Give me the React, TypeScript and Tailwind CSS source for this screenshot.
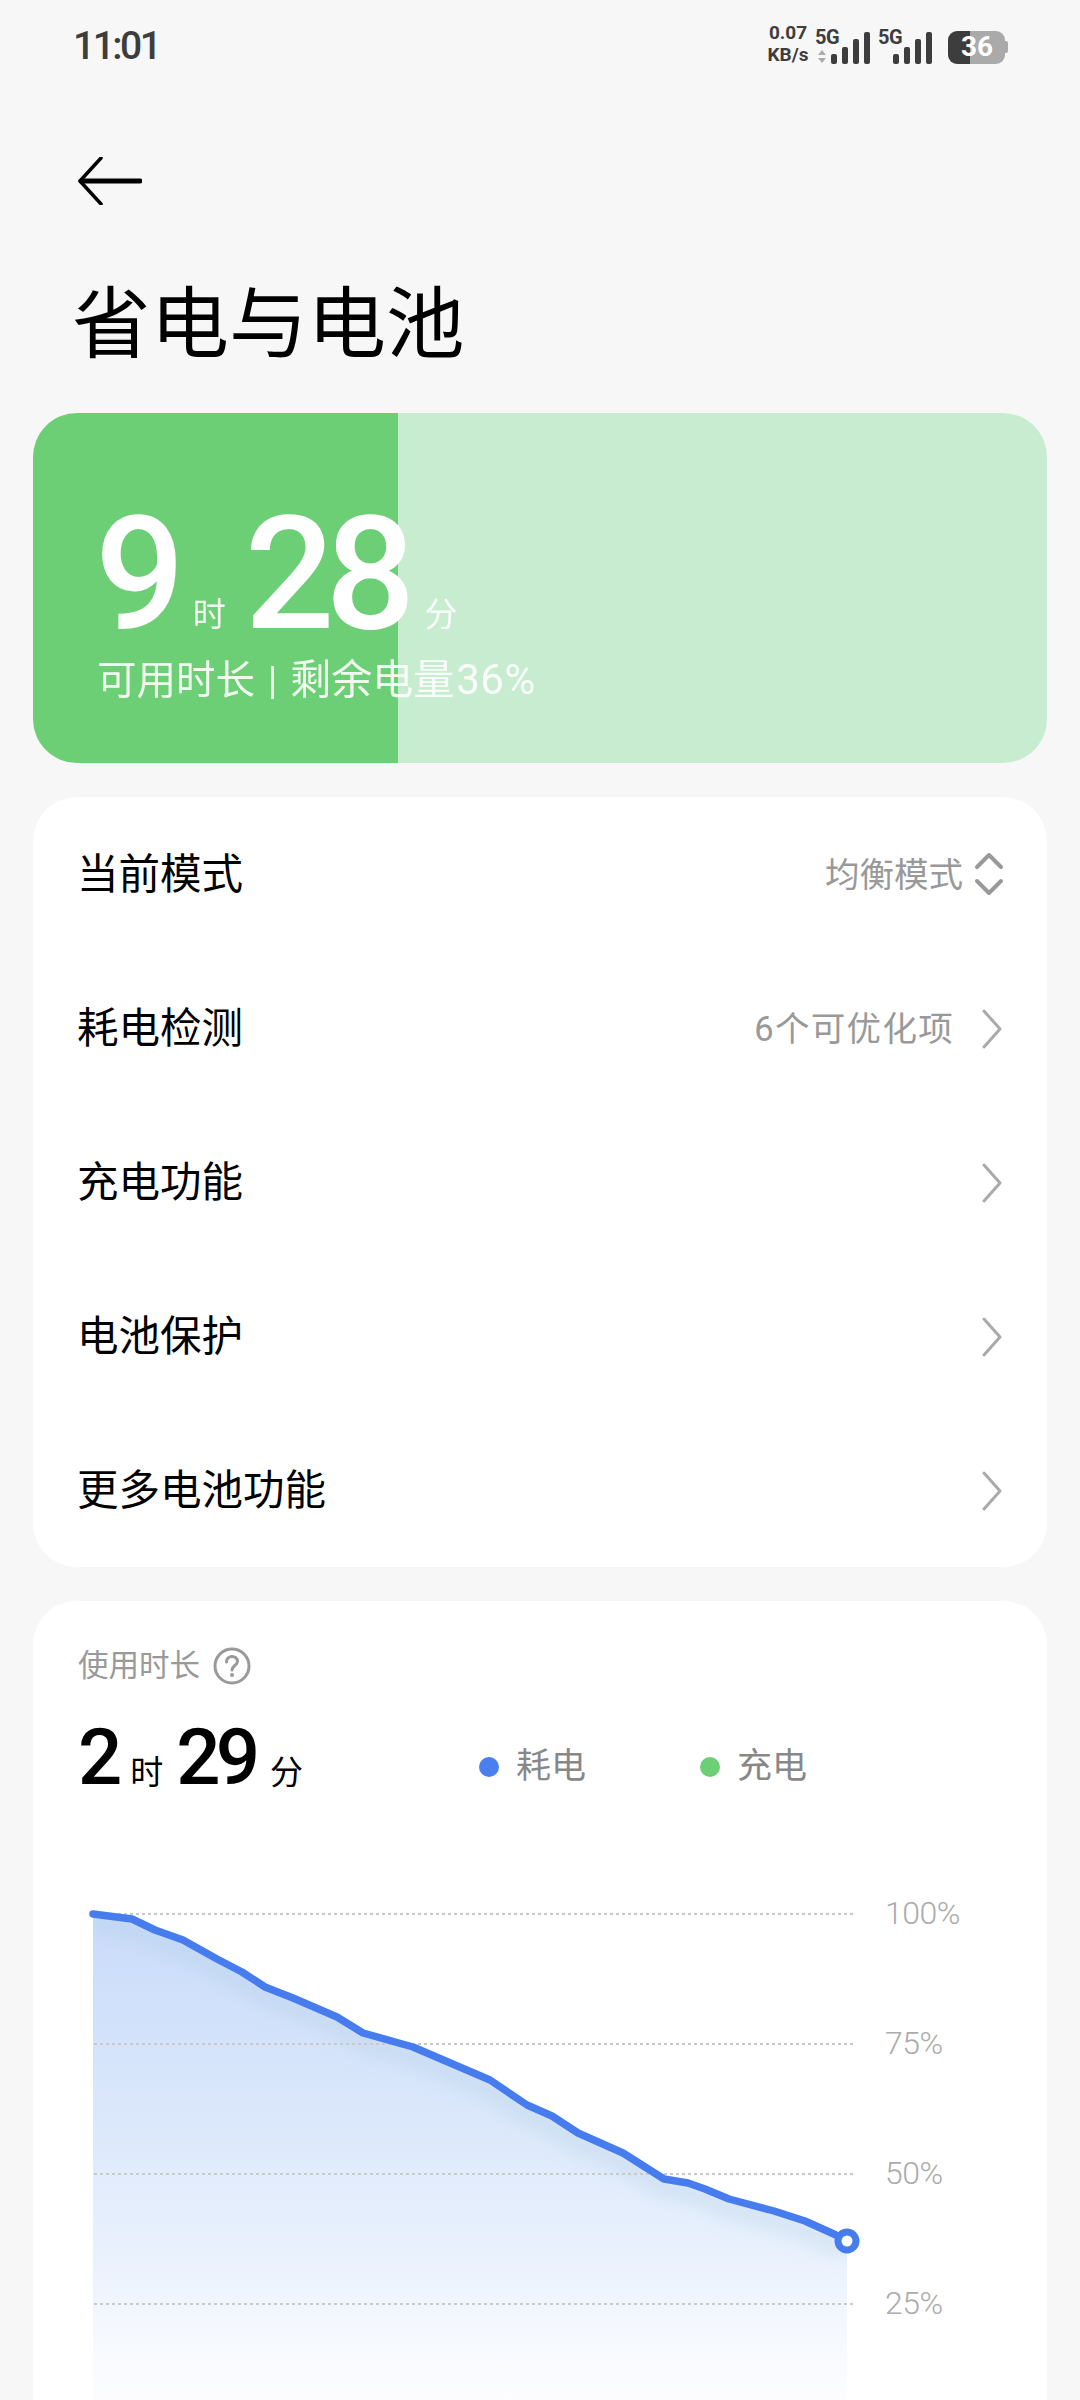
import React from "react";

const pts = "93,1914 132,1919 155,1930 183,1940 217,1959 242,1972 265,1987 293,1998 337,2017 363,2033 413,2047 490,2080 527,2105 552,2116 578,2133 623,2153 664,2179 688,2183 705,2189 729,2199 774,2211 805,2221 836,2235 847,2241";

function Chevron() {
  return (
    <svg width="22" height="40" viewBox="0 0 22 40" fill="none" className="block">
      <path d="M3 2 L19 20 L3 38" stroke="#aaaaaa" strokeWidth="3" strokeLinecap="round" strokeLinejoin="round" />
    </svg>
  );
}

function UpDown() {
  return (
    <svg width="30" height="44" viewBox="0 0 30 44" fill="none" className="block">
      <path d="M3 15 L15 3 L27 15 M3 29 L15 41 L27 29" stroke="#999999" strokeWidth="4" strokeLinecap="round" strokeLinejoin="round" />
    </svg>
  );
}

function Signal() {
  return (
    <div className="flex items-end gap-[5px] h-[32px]">
      <div className="w-[6px] h-[10px] rounded-[2px] bg-[#3d3d3d]" />
      <div className="w-[6px] h-[17px] rounded-[2px] bg-[#3d3d3d]" />
      <div className="w-[6px] h-[25px] rounded-[2px] bg-[#3d3d3d]" />
      <div className="w-[6px] h-[32px] rounded-[2px] bg-[#3d3d3d]" />
    </div>
  );
}

function Row({ label, value, valueClass, icon }: { label: string; value?: string; valueClass?: string; icon?: React.ReactNode }) {
  return (
    <div className="h-[154px] flex items-center justify-between pl-[44px] pr-[44px] pt-[2px]">
      <span className="text-[41.5px] leading-none text-black">{label}</span>
      <div className="flex items-center">
        {value && <span className={valueClass}>{value}</span>}
        {icon}
      </div>
    </div>
  );
}

export default function App() {
  return (
    <div className="w-[1080px] h-[2400px] overflow-hidden bg-[#f7f7f7] font-['Roboto','Noto_Sans_CJK_SC',sans-serif]">
      {/* status bar */}
      <div className="h-[90px] flex items-center justify-between pl-[73px] pr-[72px] pt-[2px]">
        <span className="text-[39px] leading-none font-medium text-[#3d3d3d] tracking-[-2.5px]">11:01</span>
        <div className="flex items-end h-[36px]">
          <div className="flex flex-col items-center text-[19px] leading-[22px] font-bold text-[#3d3d3d] w-[44px] mb-[-2px]">
            <span>0.07</span>
            <span>KB/s</span>
          </div>
          <div className="ml-[5px] w-[49px] h-[36px] flex flex-col justify-between">
            <span className="text-[20px] leading-[18px] font-bold text-[#3d3d3d] tracking-[-0.5px]">5G</span>
            <svg width="10" height="13" viewBox="0 0 10 13" className="ml-[2px] mb-[1px]"><path d="M5 0 L9 5 L1 5 Z M5 13 L9 8 L1 8 Z" fill="#aaaaaa" /></svg>
          </div>
          <div className="ml-[-33px]"><Signal /></div>
          <div className="ml-[8px] flex items-start h-[36px] w-[56px]">
            <span className="text-[20px] leading-[18px] font-bold text-[#3d3d3d] tracking-[-0.5px] shrink-0">5G</span>
            <div className="mt-[4px] ml-[-9px] shrink-0"><Signal /></div>
          </div>
          <div className="ml-[14px] flex items-center h-[34px]">
            <div className="w-[57px] h-[33px] rounded-[9px] bg-[linear-gradient(90deg,#3d3d3d_22px,#aaaaaa_22px)] flex items-center justify-center pl-[1px] text-[28px] font-bold text-white leading-none">36</div>
            <div className="w-[3px] h-[12px] rounded-r-[2px] bg-[#aaaaaa]" />
          </div>
        </div>
      </div>

      {/* back arrow */}
      <div className="mt-[67px] pl-[76px] h-[46px]">
        <svg width="66" height="48" viewBox="0 0 66 48" fill="none" className="block">
          <path d="M25 1 L4 24 M4 24 L25 47" stroke="#000000" strokeWidth="3.5" strokeLinecap="round" />
          <path d="M5 24 H64" stroke="#000000" strokeWidth="5" strokeLinecap="round" />
        </svg>
      </div>

      {/* title */}
      <h1 className="mt-[83px] pl-[72px] text-[78.5px] leading-[78px] font-normal text-black">省电与电池</h1>

      {/* battery card */}
      <div className="mt-[49px] mx-[33px] h-[350px] rounded-[44px] bg-[linear-gradient(90deg,#6ccf75_365px,#c7ecd0_365px)] pl-[62px] pt-[75px] text-white">
        <div className="flex items-baseline h-[172px]">
          <span className="text-[158px] leading-[172px] font-medium tracking-[-9px]">9</span>
          <span className="text-[33px] leading-none ml-[17px] opacity-90 relative top-[-2px]">时</span>
          <span className="text-[158px] leading-[172px] font-medium tracking-[-9px] ml-[19px]">28</span>
          <span className="text-[33px] leading-none ml-[18px] opacity-90 relative top-[-2px]">分</span>
        </div>
        <div className="text-[39.5px] leading-[40px] ml-[2px] opacity-90 [word-spacing:3px]">
          可用时长 | <span className="text-[41px]">剩余电量</span><span className="text-[42px] tracking-[0.5px] ml-[2px]">36%</span>
        </div>
      </div>

      {/* menu card */}
      <div className="mt-[34px] mx-[33px] rounded-[44px] bg-white h-[770px]">
        <Row label="当前模式" value="均衡模式" valueClass="text-[34.5px] leading-none text-[#999999]" icon={<div className="ml-[11px] mr-[-1px] mt-[-3px]"><UpDown /></div>} />
        <Row label="耗电检测" value="6个可优化项" valueClass="text-[34.5px] leading-none text-[#999999] tracking-[1.3px]" icon={<div className="ml-[27px]"><Chevron /></div>} />
        <Row label="充电功能" icon={<Chevron />} />
        <Row label="电池保护" icon={<Chevron />} />
        <Row label="更多电池功能" icon={<Chevron />} />
      </div>

      {/* usage card */}
      <div className="mt-[34px] mx-[33px] rounded-t-[44px] bg-white h-[900px] pt-[47px]">
        <div className="flex items-center pl-[45px] h-[36px]">
          <span className="text-[30.5px] leading-none text-[#999999]">使用时长</span>
          <svg width="38" height="38" viewBox="0 0 38 38" fill="none" className="ml-[13px] block">
            <circle cx="19" cy="19" r="17" stroke="#999999" strokeWidth="3" />
            <path d="M13.5 15 C13.5 7.5 24.5 8 24.5 14.5 C24.5 18.5 19 18.5 19 23" stroke="#999999" strokeWidth="3" strokeLinecap="round" />
            <circle cx="19" cy="28" r="2" fill="#999999" />
          </svg>
        </div>
        <div className="flex items-baseline pl-[45px] mt-[29px] text-black h-[90px]">
          <span className="text-[78px] leading-[90px] font-medium tracking-[-5px]">2</span>
          <span className="text-[33px] leading-none ml-[13px]">时</span>
          <span className="text-[78px] leading-[90px] font-medium tracking-[-5px] ml-[13px]">29</span>
          <span className="text-[33px] leading-none ml-[15px]">分</span>
          <div className="flex items-center ml-[176px] self-center mt-[17px]">
            <div className="w-[20px] h-[20px] rounded-full bg-[#4a7ff0]" />
            <span className="ml-[17px] text-[35px] leading-none text-[#888888]">耗电</span>
            <div className="w-[20px] h-[20px] rounded-full bg-[#6ccf75] ml-[114px]" />
            <span className="ml-[17px] text-[35px] leading-none text-[#888888]">充电</span>
          </div>
        </div>

        {/* chart */}
        <div className="flex mt-[97px] pl-[51px]">
          <svg width="776" height="500" viewBox="84 1900 776 500" className="block shrink-0">
            <defs>
              <linearGradient id="fillG" x1="0" y1="1914" x2="0" y2="2400" gradientUnits="userSpaceOnUse">
                <stop offset="0" stopColor="#c9dbfa" />
                <stop offset="0.4" stopColor="#dae7fb" />
                <stop offset="0.7" stopColor="#e9f1fd" />
                <stop offset="0.88" stopColor="#f6f9fe" />
                <stop offset="1" stopColor="#fdfdff" />
              </linearGradient>
              <clipPath id="areaClip">
                <polygon points={`${pts} 847,2400 93,2400`} />
              </clipPath>
              <filter id="soft" x="-10%" y="-30%" width="120%" height="160%">
                <feGaussianBlur stdDeviation="9" />
              </filter>
            </defs>
            <polygon points={`${pts} 847,2400 93,2400`} fill="url(#fillG)" />
            <g clipPath="url(#areaClip)">
              <polyline points={pts} fill="none" stroke="#a8c9dc" strokeOpacity="0.35" strokeWidth="16" transform="translate(0 10)" filter="url(#soft)" />
            </g>
            {[1914, 2044, 2174, 2304].map((y) => (
              <line key={y} x1="94" x2="853" y1={y} y2={y} stroke="#c9c9c9" strokeWidth="2" strokeDasharray="3 3" />
            ))}
            <polyline points={pts} fill="none" stroke="#477cee" strokeWidth="7.5" strokeLinecap="round" strokeLinejoin="round" />
            <circle cx="847" cy="2241" r="9" fill="#ffffff" stroke="#477cee" strokeWidth="7" />
          </svg>
          <div className="ml-[25px] mt-[-52px] flex flex-col text-[32px] text-[#ababab] tracking-[-0.5px] font-light">
            <div className="h-[130px] flex items-center">100%</div>
            <div className="h-[130px] flex items-center">75%</div>
            <div className="h-[130px] flex items-center">50%</div>
            <div className="h-[130px] flex items-center">25%</div>
          </div>
        </div>
      </div>
    </div>
  );
}
